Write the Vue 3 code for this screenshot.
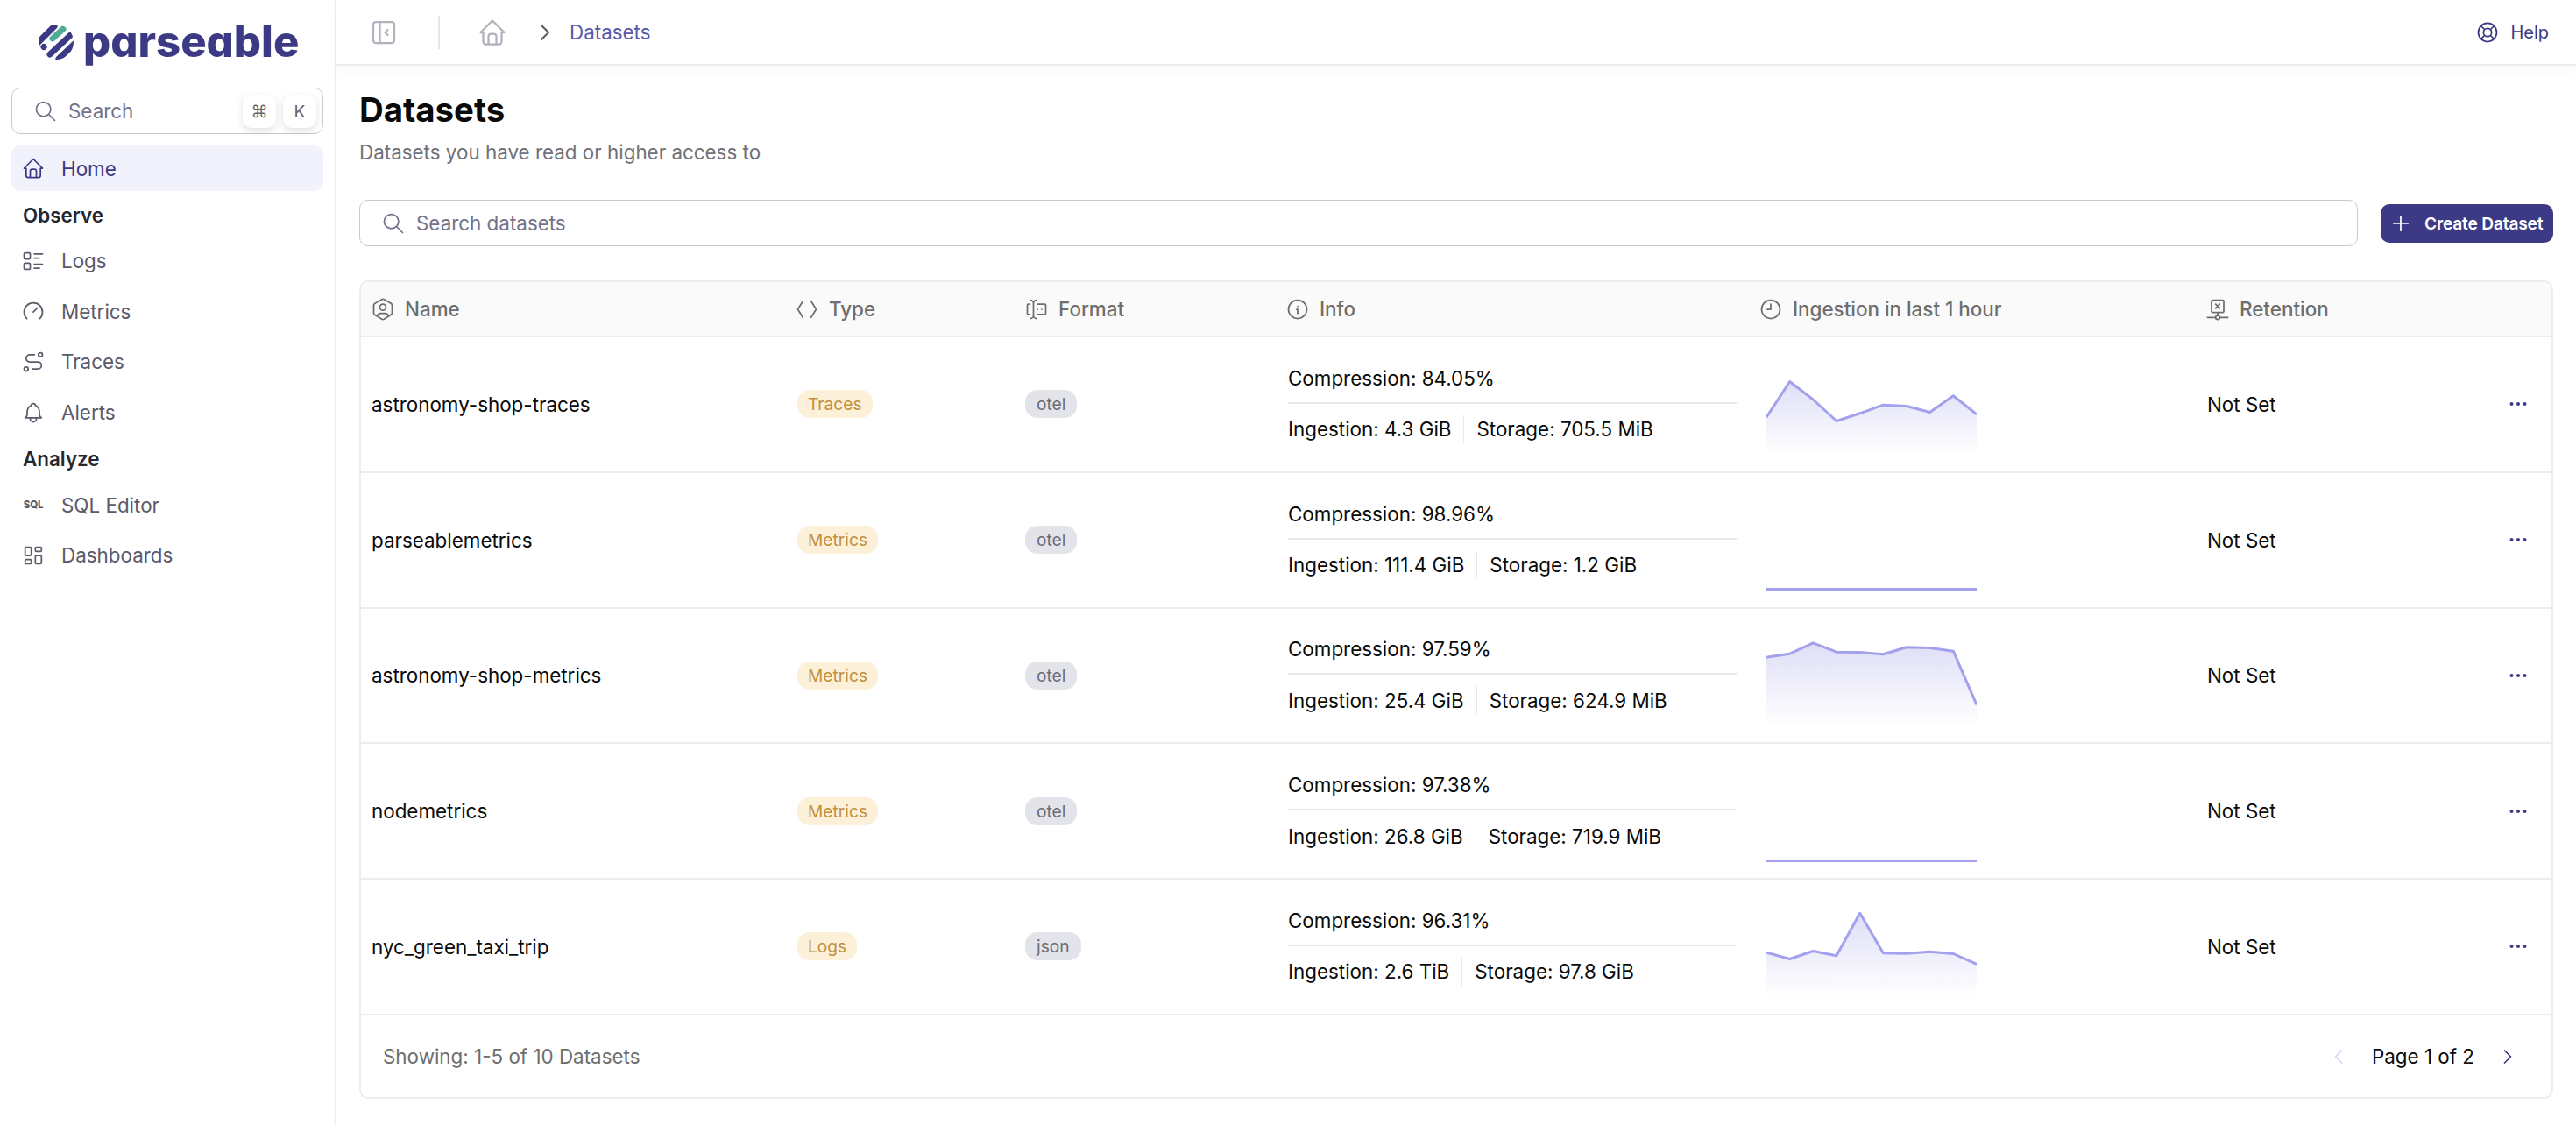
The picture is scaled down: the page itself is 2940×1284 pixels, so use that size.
<template>
	<div class="app">
		<aside class="sidebar">
			<div class="logo">
				<svg class="logo-mark" width="40" height="40" viewBox="0 0 40 40">
					<defs>
						<clipPath id="logoClip"><circle cx="20" cy="20" r="20" /></clipPath>
					</defs>
					<g clip-path="url(#logoClip)" fill="none" stroke-linecap="round" stroke-width="7">
						<path d="M-1 21 L18 2" stroke="#3c3a85" />
						<path d="M16 16 L28 5" stroke="#4dad96" />
						<path d="M6 25.5 L6.1 25.4" stroke="#3c3a85" />
						<path d="M13 34 L36 12.5" stroke="#3c3a85" />
						<path d="M23 39 L42 21" stroke="#3c3a85" />
					</g>
				</svg>
				<span class="logo-text">parseable</span>
			</div>

			<div class="side-search">
				<svg class="icon" viewBox="0 0 24 24"><path :d="icons.search" /></svg>
				<span class="side-search-text">Search</span>
				<span class="kbd first">⌘</span>
				<span class="kbd">K</span>
			</div>

			<div class="nav-item active">
				<svg class="icon" viewBox="0 0 24 24"><path :d="icons.home" /></svg>
				<span>Home</span>
			</div>

			<template v-for="group in navGroups" :key="group.title">
				<div class="nav-title">{{ group.title }}</div>
				<div v-for="item in group.items" :key="item.label" class="nav-item">
					<span v-if="item.label === 'SQL Editor'" class="sql-icon">SQL</span>
					<svg v-else class="icon" viewBox="0 0 24 24"><path :d="item.icon" /></svg>
					<span>{{ item.label }}</span>
				</div>
			</template>
		</aside>

		<main class="main">
			<header class="topbar">
				<svg class="icon toggle" viewBox="0 0 24 24"><path :d="icons.sidebar" /></svg>
				<span class="top-divider"></span>
				<svg class="icon crumb-home" viewBox="0 0 24 24"><path :d="icons.home" /></svg>
				<svg class="icon crumb-chevron" viewBox="0 0 24 24"><path :d="icons.chevronRight" /></svg>
				<span class="crumb-text">Datasets</span>
				<div class="help">
					<svg class="icon" viewBox="0 0 24 24"><path :d="icons.help" /></svg>
					<span>Help</span>
				</div>
			</header>

			<section class="content">
				<h1 class="title">Datasets</h1>
				<p class="subtitle">Datasets you have read or higher access to</p>

				<div class="toolbar">
					<div class="search-input">
						<svg class="icon" viewBox="0 0 24 24"><path :d="icons.search" /></svg>
						<span>Search datasets</span>
					</div>
					<button class="create-btn">
						<svg class="icon" viewBox="0 0 24 24"><path :d="icons.plus" /></svg>
						<span>Create Dataset</span>
					</button>
				</div>

				<div class="table">
					<div class="table-row table-head">
						<div v-for="col in columns" :key="col.label" class="head-cell">
							<svg class="icon" viewBox="0 0 24 24"><path :d="col.icon" /></svg>
							<span>{{ col.label }}</span>
						</div>
					</div>

					<div v-for="row in rows" :key="row.name" class="table-row body-row">
						<div class="cell name-cell">{{ row.name }}</div>
						<div class="cell"><span class="badge type-badge">{{ row.type }}</span></div>
						<div class="cell"><span class="badge format-badge">{{ row.format }}</span></div>
						<div class="cell info-cell">
							<div class="info-top">Compression: {{ row.compression }}</div>
							<div class="info-bottom">
								<span>Ingestion: {{ row.ingestion }}</span>
								<span class="info-sep"></span>
								<span>Storage: {{ row.storage }}</span>
							</div>
						</div>
						<div class="cell chart-cell">
							<svg width="240" height="120" viewBox="0 0 240 120">
								<defs>
									<linearGradient :id="'fill-' + row.name" x1="0" y1="0" x2="0" y2="1">
										<stop offset="0" stop-color="#8380e1" stop-opacity="0.26" />
										<stop offset="1" stop-color="#8380e1" stop-opacity="0" />
									</linearGradient>
								</defs>
								<path :d="areaPath(row.points)" :fill="'url(#fill-' + row.name + ')'" />
								<path :d="linePath(row.points)" fill="none" stroke="#a3a1ec" stroke-width="3" stroke-linejoin="round" />
							</svg>
						</div>
						<div class="cell retention-cell">
							<span>Not Set</span>
							<svg class="dots" width="20" height="6" viewBox="0 0 20 6">
								<circle cx="2.5" cy="3" r="2" />
								<circle cx="10" cy="3" r="2" />
								<circle cx="17.5" cy="3" r="2" />
							</svg>
						</div>
					</div>

					<div class="table-foot">
						<span class="showing">Showing: 1-5 of 10 Datasets</span>
						<div class="pager">
							<svg class="icon pager-prev" viewBox="0 0 24 24"><path :d="icons.chevronLeft" /></svg>
							<span>Page 1 of 2</span>
							<svg class="icon pager-next" viewBox="0 0 24 24"><path :d="icons.chevronRight" /></svg>
						</div>
					</div>
				</div>
			</section>
		</main>
	</div>
</template>

<script setup>
	const icons = {
		search: "M10 10m-7 0a7 7 0 1 0 14 0a7 7 0 1 0 -14 0 M21 21l-6 -6",
		home: "M5 12l-2 0l9 -9l9 9l-2 0 M5 12v7a2 2 0 0 0 2 2h10a2 2 0 0 0 2 -2v-7 M9 21v-6a2 2 0 0 1 2 -2h2a2 2 0 0 1 2 2v6",
		sidebar: "M4 6a2 2 0 0 1 2 -2h12a2 2 0 0 1 2 2v12a2 2 0 0 1 -2 2h-12a2 2 0 0 1 -2 -2z M9 4v16 M15 10l-2 2l2 2",
		chevronRight: "M9 6l6 6l-6 6",
		chevronLeft: "M15 6l-6 6l6 6",
		help: "M8 12a4 4 0 1 0 8 0a4 4 0 1 0 -8 0 M3 12a9 9 0 1 0 18 0a9 9 0 1 0 -18 0 M15 15l3.35 3.35 M9 15l-3.35 3.35 M5.65 5.65l3.35 3.35 M18.35 5.65l-3.35 3.35",
		plus: "M12 5v14 M5 12h14"
	};

	const navGroups = [
		{
			title: "Observe",
			items: [
				{ label: "Logs", icon: "M13 5h8 M13 9h5 M13 15h8 M13 19h5 M3 5a1 1 0 0 1 1 -1h4a1 1 0 0 1 1 1v4a1 1 0 0 1 -1 1h-4a1 1 0 0 1 -1 -1z M3 15a1 1 0 0 1 1 -1h4a1 1 0 0 1 1 1v4a1 1 0 0 1 -1 1h-4a1 1 0 0 1 -1 -1z" },
				{ label: "Metrics", icon: "M5.636 19.364a9 9 0 1 1 12.728 0 M16 9l-4 4" },
				{ label: "Traces", icon: "M3 19a2 2 0 1 0 4 0a2 2 0 0 0 -4 0 M19 7a2 2 0 1 0 0 -4a2 2 0 0 0 0 4z M11 19h5.5a3.5 3.5 0 0 0 0 -7h-8a3.5 3.5 0 0 1 0 -7h4.5" },
				{ label: "Alerts", icon: "M10 5a2 2 0 1 1 4 0a7 7 0 0 1 4 6v3a4 4 0 0 0 2 3h-16a4 4 0 0 0 2 -3v-3a7 7 0 0 1 4 -6 M9 17v1a3 3 0 0 0 6 0v-1" }
			]
		},
		{
			title: "Analyze",
			items: [
				{ label: "SQL Editor" },
				{ label: "Dashboards", icon: "M5 4h4a1 1 0 0 1 1 1v6a1 1 0 0 1 -1 1h-4a1 1 0 0 1 -1 -1v-6a1 1 0 0 1 1 -1 M5 16h4a1 1 0 0 1 1 1v2a1 1 0 0 1 -1 1h-4a1 1 0 0 1 -1 -1v-2a1 1 0 0 1 1 -1 M15 12h4a1 1 0 0 1 1 1v6a1 1 0 0 1 -1 1h-4a1 1 0 0 1 -1 -1v-6a1 1 0 0 1 1 -1 M15 4h4a1 1 0 0 1 1 1v2a1 1 0 0 1 -1 1h-4a1 1 0 0 1 -1 -1v-2a1 1 0 0 1 1 -1" }
			]
		}
	];

	const columns = [
		{ label: "Name", icon: "M12 13a3 3 0 1 0 0 -6a3 3 0 0 0 0 6z M6.201 18.744a4 4 0 0 1 3.799 -2.744h4a4 4 0 0 1 3.798 2.741 M19.875 6.27c.7 .398 1.13 1.143 1.125 1.948v7.284c0 .809 -.443 1.555 -1.158 1.948l-6.75 4.27a2.269 2.269 0 0 1 -2.184 0l-6.75 -4.27a2.225 2.225 0 0 1 -1.158 -1.948v-7.285c0 -.809 .443 -1.554 1.158 -1.947l6.75 -3.98a2.33 2.33 0 0 1 2.25 0l6.75 3.98h-.033z" },
		{ label: "Type", icon: "M8 4l-5 8l5 8 M16 4l5 8l-5 8" },
		{ label: "Format", icon: "M12 3a3 3 0 0 0 -3 3v12a3 3 0 0 0 3 3 M6 3a3 3 0 0 1 3 3v12a3 3 0 0 1 -3 3 M13 7h7a1 1 0 0 1 1 1v8a1 1 0 0 1 -1 1h-7 M5 7h-1a1 1 0 0 0 -1 1v8a1 1 0 0 0 1 1h1 M17 12h.01 M13 12h.01" },
		{ label: "Info", icon: "M3 12a9 9 0 1 0 18 0a9 9 0 0 0 -18 0 M12 9h.01 M11 12h1v4h1" },
		{ label: "Ingestion in last 1 hour", icon: "M3 12a9 9 0 1 0 18 0a9 9 0 0 0 -18 0 M12 12h-3.5 M12 7v5" },
		{ label: "Retention", icon: "M7 3h10a1 1 0 0 1 1 1v10a1 1 0 0 1 -1 1h-10a1 1 0 0 1 -1 -1v-10a1 1 0 0 1 1 -1z M10 7l4 4 M14 7l-4 4 M12 15v3 M2 20h8 M14 20h8 M10 20a2 2 0 1 0 4 0a2 2 0 1 0 -4 0" }
	];

	const flat = Array(10).fill(116.5);

	const rows = [
		{
			name: "astronomy-shop-traces", type: "Traces", format: "otel",
			compression: "84.05%", ingestion: "4.3 GiB", storage: "705.5 MiB",
			points: [75.2, 34.5, 55, 79.5, 70.8, 61.2, 62.5, 69.5, 50.8, 71.8]
		},
		{
			name: "parseablemetrics", type: "Metrics", format: "otel",
			compression: "98.96%", ingestion: "111.4 GiB", storage: "1.2 GiB",
			points: flat
		},
		{
			name: "astronomy-shop-metrics", type: "Metrics", format: "otel",
			compression: "97.59%", ingestion: "25.4 GiB", storage: "624.9 MiB",
			points: [39.2, 35.2, 22.8, 33.2, 33.5, 35.8, 27.8, 28.5, 32.2, 93.5]
		},
		{
			name: "nodemetrics", type: "Metrics", format: "otel",
			compression: "97.38%", ingestion: "26.8 GiB", storage: "719.9 MiB",
			points: flat
		},
		{
			name: "nyc_green_taxi_trip", type: "Logs", format: "json",
			compression: "96.31%", ingestion: "2.6 TiB", storage: "97.8 GiB",
			points: [67.2, 74.5, 65.5, 70.8, 22.2, 67.8, 68.2, 66.2, 68.5, 80.5]
		}
	];

	// 折线坐标
	const linePath = points =>
		points.map((y, i) => `${i ? "L" : "M"}${(i * 240) / 9} ${y}`).join(" ");

	const areaPath = points => `${linePath(points)} L240 118 L0 118 Z`;
</script>

<style scoped>
	.app {
		display: flex;
		width: 2940px;
		height: 1284px;
		overflow: hidden;
		background: #fff;
		font-family: Inter, "Noto Sans", sans-serif;
		font-size: 22.4px;
		color: #0a0a0a;
	}

	.icon {
		width: 28px;
		height: 28px;
		flex-shrink: 0;
		fill: none;
		stroke: currentColor;
		stroke-width: 1.5;
		stroke-linecap: round;
		stroke-linejoin: round;
	}

	/* 侧边栏 */
	.sidebar {
		width: 384px;
		flex-shrink: 0;
		box-sizing: border-box;
		padding: 0 13px;
		border-right: 2px solid #ededed;
	}

	.logo {
		height: 100px;
		display: flex;
		align-items: flex-start;
		padding: 28px 0 0 31px;
		box-sizing: border-box;
		gap: 11px;
	}

	.logo-text {
		font-size: 49px;
		line-height: 40px;
		font-weight: 800;
		color: #3c3a85;
		font-feature-settings: "cv11";
	}

	.side-search {
		height: 53px;
		box-sizing: border-box;
		display: flex;
		align-items: center;
		padding: 0 7px 0 24px;
		border: 1.5px solid #c9c9d3;
		border-radius: 10px;
		color: #72728a;
		margin-bottom: 13px;
	}

	.side-search-text {
		margin-left: 12px;
	}

	.kbd {
		width: 38px;
		height: 38px;
		display: flex;
		align-items: center;
		justify-content: center;
		border-radius: 10px;
		background: #fff;
		box-shadow: 0 3px 8px rgba(0, 0, 0, 0.12);
		font-size: 19.2px;
		color: #66666f;
		margin-left: 8px;
	}

	.kbd.first {
		margin-left: auto;
	}

	.nav-item {
		height: 57.6px;
		display: flex;
		align-items: center;
		gap: 18px;
		padding-left: 11px;
		color: #5b5b6b;
	}

	.nav-item.active {
		height: 52px;
		margin-bottom: 3px;
		border-radius: 10px;
		background: #f1f2fc;
		color: #3c3a85;
	}

	.nav-title {
		height: 48px;
		display: flex;
		align-items: center;
		padding-left: 13px;
		font-weight: 600;
		color: #27272f;
	}

	.sql-icon {
		width: 28px;
		flex-shrink: 0;
		text-align: center;
		font-size: 11.5px;
		font-weight: 800;
		letter-spacing: -0.2px;
	}

	/* 顶栏 */
	.main {
		flex: 1;
		min-width: 0;
	}

	.topbar {
		height: 75px;
		box-sizing: border-box;
		display: flex;
		align-items: center;
		padding: 0 31px 0 36px;
		border-bottom: 2px solid #ededed;
		box-shadow: 0 8px 14px rgba(0, 0, 0, 0.025);
	}

	.toggle {
		width: 36px;
		height: 36px;
		color: #b2b2bd;
	}

	.top-divider {
		width: 2px;
		height: 38px;
		margin: 0 42px 0 44px;
		background: #e5e5ea;
	}

	.crumb-home {
		width: 36px;
		height: 36px;
		color: #b2b2bd;
	}

	.crumb-chevron {
		width: 32px;
		height: 32px;
		margin-left: 26px;
		color: #5b5b6b;
	}

	.crumb-text {
		margin-left: 12px;
		color: #5a57ad;
	}

	.help {
		margin-left: auto;
		display: flex;
		align-items: center;
		gap: 12px;
		font-size: 20px;
		color: #3c3a85;
	}

	/* 内容区 */
	.content {
		padding: 26px 26px 0;
	}

	.title {
		margin: 0;
		font-size: 38.4px;
		line-height: 48px;
		font-weight: 700;
	}

	.subtitle {
		margin: 8px 0 37px;
		line-height: 34px;
		color: #71717a;
	}

	.toolbar {
		display: flex;
		align-items: center;
		gap: 26px;
		margin-bottom: 39px;
	}

	.search-input {
		flex: 1;
		height: 53px;
		box-sizing: border-box;
		display: flex;
		align-items: center;
		gap: 12px;
		padding-left: 24px;
		border: 1.5px solid #c9c9d3;
		border-radius: 10px;
		color: #72728a;
	}

	.create-btn {
		width: 197px;
		height: 44px;
		box-sizing: border-box;
		display: flex;
		align-items: center;
		gap: 13px;
		padding: 0 0 0 9px;
		border: none;
		border-radius: 10px;
		background: #3c3a85;
		color: #fff;
		font-family: inherit;
		font-size: 19.2px;
		font-weight: 600;
		letter-spacing: -0.2px;
		white-space: nowrap;
	}

	/* 表格 */
	.table {
		border: 2px solid #ededed;
		border-radius: 10px;
		overflow: hidden;
	}

	.table-row {
		display: grid;
		grid-template-columns: 484px 260px 300px 546px 504px 1fr;
		border-bottom: 2px solid #ededed;
	}

	.table-head {
		height: 63px;
		box-sizing: border-box;
		background: #fafafa;
	}

	.body-row {
		height: 154.75px;
		box-sizing: border-box;
	}

	.head-cell {
		display: flex;
		align-items: center;
		gap: 11px;
		padding-left: 11px;
		font-weight: 500;
		color: #6e6e6e;
	}

	.head-cell:nth-child(3) {
		padding-left: 13px;
	}

	.head-cell:nth-child(5) {
		padding-left: 5px;
	}

	.cell {
		display: flex;
		align-items: center;
		padding-left: 14px;
	}

	.name-cell {
		padding-left: 12px;
	}

	.badge {
		height: 32px;
		display: flex;
		align-items: center;
		padding: 0 12px;
		border-radius: 14px;
		font-size: 19.2px;
	}

	.type-badge {
		background: #fdf0d9;
		color: #c48f3b;
	}

	.format-badge {
		padding: 0 13px;
		background: #e3e4ea;
		color: #6b6b76;
	}

	.info-cell {
		flex-direction: column;
		align-items: stretch;
		justify-content: center;
		padding-right: 19px;
	}

	.info-top {
		height: 30px;
		line-height: 30px;
		padding-bottom: 12px;
		border-bottom: 2px solid #e7e7e7;
	}

	.info-bottom {
		display: flex;
		align-items: center;
		margin-top: 13px;
		height: 32px;
	}

	.info-sep {
		width: 1px;
		height: 32px;
		margin: 0 14px;
		background: #e7e7e7;
	}

	.chart-cell svg {
		display: block;
	}

	.retention-cell {
		justify-content: space-between;
		padding-left: 13px;
		padding-right: 28px;
	}

	.dots {
		fill: #3c3a85;
	}

	.table-foot {
		height: 93.5px;
		box-sizing: border-box;
		display: flex;
		align-items: center;
		justify-content: space-between;
		padding: 0 36px 0 25px;
	}

	.showing {
		color: #6e6e6e;
	}

	.pager {
		display: flex;
		align-items: center;
		gap: 24px;
	}

	.pager-prev {
		color: #d3d4f5;
	}

	.pager-next {
		color: #3c3a85;
	}
</style>
